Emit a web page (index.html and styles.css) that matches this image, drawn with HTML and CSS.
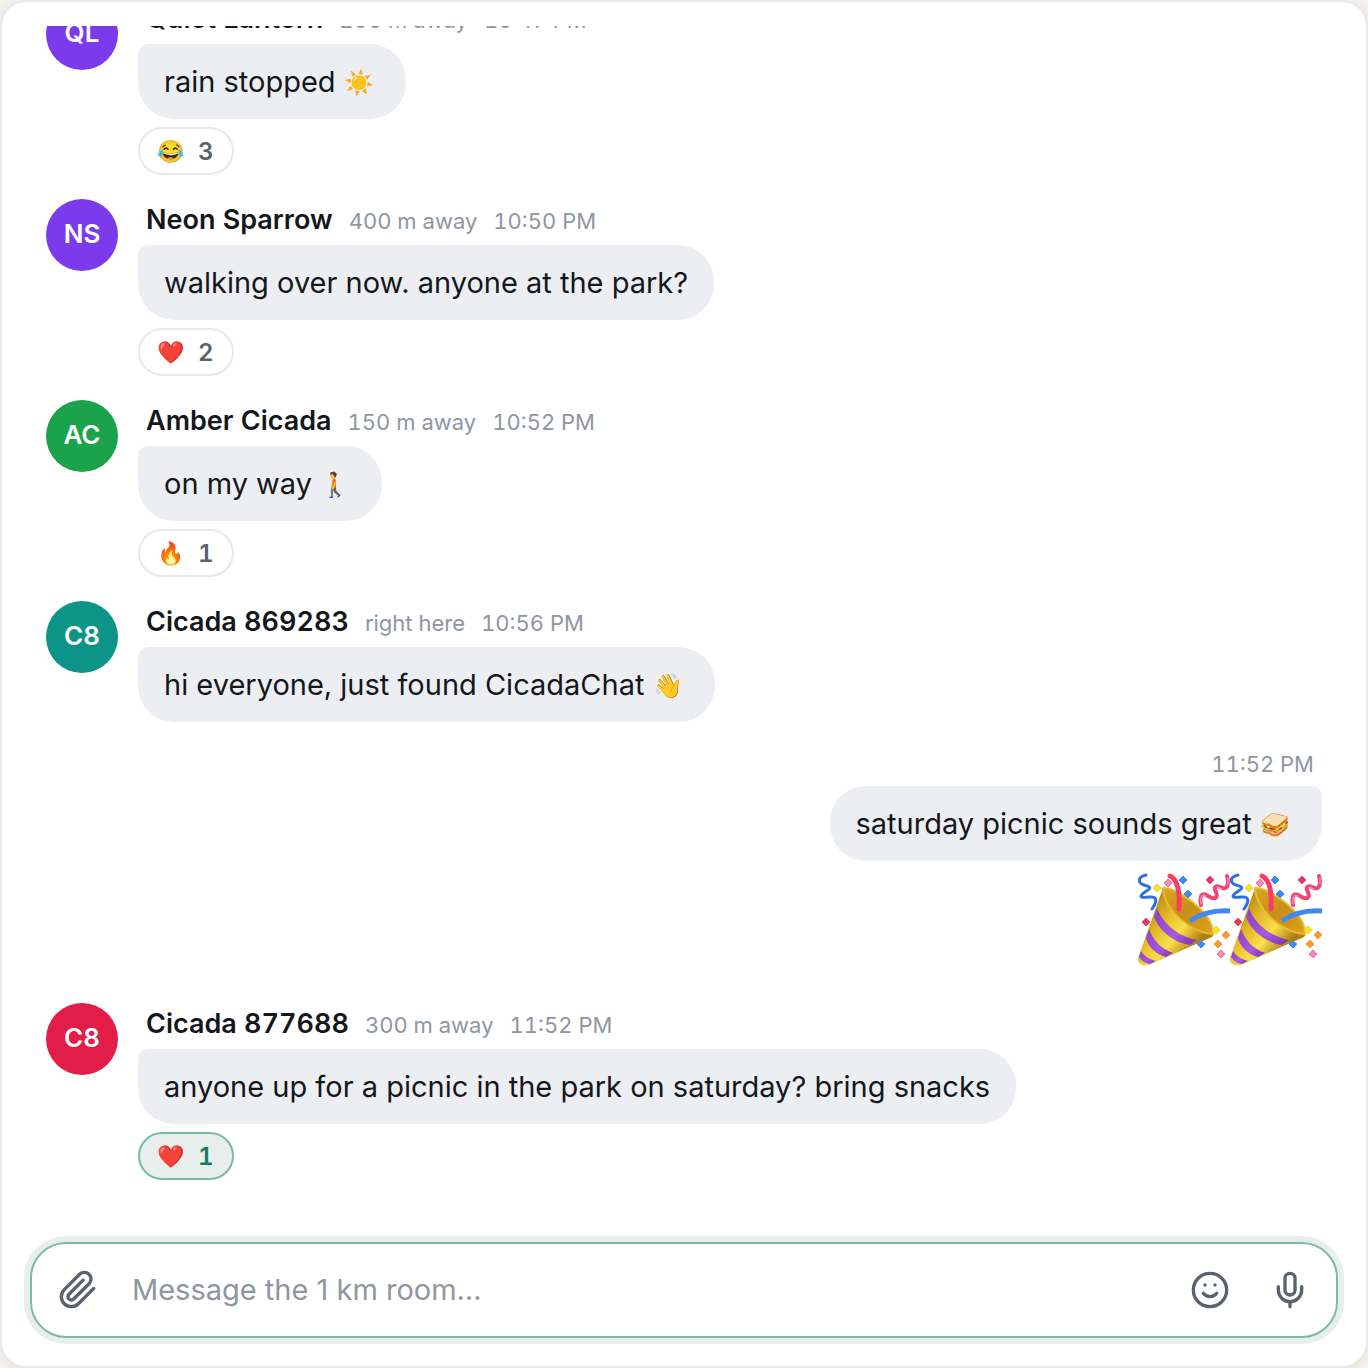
FILE: index.html
```html
<!DOCTYPE html>
<html lang="en">

<head>
  <meta charset="UTF-8" />
  <title>CicadaChat</title>
  <meta name="viewport" content="width=device-width, initial-scale=1.0" />
  <link rel="stylesheet" href="styles.css">
</head>

<body>
  <!-- Shared drawings -->
  <svg class="defs" width="0" height="0" aria-hidden="true">
    <defs>
      <linearGradient id="gold" x1="0.1" y1="0.3" x2="0.7" y2="0.8">
        <stop offset="0" stop-color="#b88a14" />
        <stop offset="0.3" stop-color="#e2b526" />
        <stop offset="0.65" stop-color="#fbe04a" />
        <stop offset="1" stop-color="#b07f14" />
      </linearGradient>
      <linearGradient id="mouth" x1="0" y1="0" x2="1" y2="1">
        <stop offset="0" stop-color="#d9a520" />
        <stop offset="0.5" stop-color="#c88e18" />
        <stop offset="1" stop-color="#dfa21c" />
      </linearGradient>
      <linearGradient id="violet" x1="0" y1="0" x2="1" y2="1">
        <stop offset="0" stop-color="#8a3fc4" />
        <stop offset="0.6" stop-color="#a758e0" />
        <stop offset="1" stop-color="#7b2fb0" />
      </linearGradient>
      <symbol id="popper" viewBox="0 0 92 94">
        <path fill="url(#gold)" d="M25 15C25 34 46 58 76 61L74 64L11 92C6 94 -1 91 0 85Z" />
        <path fill="url(#violet)" d="M19 35C24 49 38 63 59 67L52 72C34 69 21 57 16 44Z" />
        <path fill="url(#violet)" d="M11 56C15 67 23 76 35 80L28 84C17 81 10 73 8 65Z" />
        <path fill="url(#violet)" d="M3 78C6 83 11 86 18 88L12 91C6 90 3 87 1 84Z" />
        <path fill="url(#mouth)" stroke="#e9bb2c" stroke-width="2" d="M25 15C36 13 76 39 75 61C53 60 26 37 25 15Z" />
        <path fill="none" stroke="#fa3c68" stroke-width="5" stroke-linecap="round" d="M32 3C39 6 42 18 41 36" />
        <path fill="none" stroke="#3d8af7" stroke-width="5" d="M52 48C62 41 76 37 92 38" />
        <path fill="none" stroke="#2f6fe4" stroke-width="3" stroke-linecap="round" stroke-linejoin="round" d="M8 2C-1 4 0 10 6 12C13 14 14 15 7 19C0 24 3 25 11 24C20 23 19 29 14 36" />
        <path fill="none" stroke="#ee4675" stroke-width="4" stroke-linecap="round" stroke-linejoin="round" d="M63 32C61 22 64 19 70 23C78 28 81 24 77 17C76 13 79 12 84 15C90 17 91 10 89 3" />
        <path fill="none" stroke="#ffa9c3" stroke-width="1" stroke-linecap="round" d="M63 31C62 24 64 20 68 23M79 14L84 16M90 11L90 5" />
        <g stroke-linejoin="round" stroke-width="1">
          <path fill="#3d8af7" stroke="#3d8af7" d="M45 3L49 7L45 11L41 7ZM50 17L54 21L50 25L46 21ZM63 68L67 71L63 75L59 71Z" />
          <path fill="#f58ab5" stroke="#f0719f" d="M30 6L34 10L30 14L26 10ZM83 77L87 81L83 85L79 81Z" />
          <path fill="#f8e32c" stroke="#ecd324" d="M19 11L23 15L19 19L15 15ZM78 53L82 57L78 61L74 57Z" />
          <path fill="#e23a60" stroke="#e2557a" d="M72 3L76 7L72 11L68 7ZM8 45L12 49L8 53L4 49Z" />
          <path fill="#f79a36" stroke="#f79a36" d="M88 58L92 62L88 66L84 62ZM80 67L84 71L80 75L76 71Z" />
        </g>
      </symbol>
    </defs>
  </svg>

  <main class="room">
    <div class="messages">
      <article class="message">
        <div class="avatar violet">QL</div>
        <div class="body">
          <header class="meta"><strong>Quiet Lantern</strong><span>200 m away</span><time>10:47 PM</time></header>
          <p class="bubble">rain stopped <span class="emoji">☀️</span></p>
          <button class="reaction" type="button"><span class="emoji">😂</span>3</button>
        </div>
      </article>

      <article class="message">
        <div class="avatar violet">NS</div>
        <div class="body">
          <header class="meta"><strong>Neon Sparrow</strong><span>400 m away</span><time>10:50 PM</time></header>
          <p class="bubble">walking over now. anyone at the park?</p>
          <button class="reaction" type="button"><span class="emoji">❤️</span>2</button>
        </div>
      </article>

      <article class="message">
        <div class="avatar green">AC</div>
        <div class="body">
          <header class="meta"><strong>Amber Cicada</strong><span>150 m away</span><time>10:52 PM</time></header>
          <p class="bubble">on my way <span class="emoji">🚶</span></p>
          <button class="reaction" type="button"><span class="emoji">🔥</span>1</button>
        </div>
      </article>

      <article class="message">
        <div class="avatar teal">C8</div>
        <div class="body">
          <header class="meta"><strong>Cicada 869283</strong><span>right here</span><time>10:56 PM</time></header>
          <p class="bubble">hi everyone, just found CicadaChat <span class="emoji">👋</span></p>
        </div>
      </article>

      <!-- Own messages -->
      <article class="message own">
        <div class="body">
          <header class="meta"><time>11:52 PM</time></header>
          <p class="bubble">saturday picnic sounds great <span class="emoji">🥪</span></p>
          <div class="jumbo">
            <svg role="img" aria-label="party popper"><use href="#popper" /></svg>
            <svg role="img" aria-label="party popper"><use href="#popper" /></svg>
          </div>
        </div>
      </article>

      <article class="message">
        <div class="avatar red">C8</div>
        <div class="body">
          <header class="meta"><strong>Cicada 877688</strong><span>300 m away</span><time>11:52 PM</time></header>
          <p class="bubble">anyone up for a picnic in the park on saturday? bring snacks</p>
          <button class="reaction mine" type="button" aria-pressed="true"><span class="emoji">❤️</span>1</button>
        </div>
      </article>
    </div>

    <!-- Composer -->
    <form class="composer">
      <button class="tool" type="button" aria-label="Attach a file">
        <svg viewBox="0 0 24 24"><path d="M21.440 11.050l-9.190 9.190a6 6 0 0 1-8.490-8.490l9.190-9.190a4 4 0 0 1 5.660 5.660l-9.200 9.190a2 2 0 0 1-2.830-2.830l8.490-8.480" /></svg>
      </button>
      <input type="text" aria-label="Message" placeholder="Message the 1 km room…">
      <button class="tool" type="button" aria-label="Add emoji">
        <svg viewBox="0 0 24 24"><circle cx="12" cy="12" r="10" /><path d="M8 14s1.500 2 4 2 4-2 4-2M9 9h.01M15 9h.01" /></svg>
      </button>
      <button class="tool" type="button" aria-label="Record voice">
        <svg viewBox="0 0 24 24"><path d="M12 2a3 3 0 0 0-3 3v7a3 3 0 0 0 6 0V5a3 3 0 0 0-3-3ZM19 10v2a7 7 0 0 1-14 0v-2M12 19v3" /></svg>
      </button>
    </form>
  </main>
</body>

</html>
```
FILE: styles.css
```css
* {
  box-sizing: border-box;
  margin: 0;
  padding: 0;
}

body {
  font-family: Inter, sans-serif;
  background-color: #f2f1ec;
  color: #14181c;
}

button,
input {
  font: inherit;
  border: none;
  background: none;
}

.defs {
  display: block;
}

.room {
  height: 100vh;
  display: flex;
  flex-direction: column;
  padding: 24px 28px 28px;
  background-color: white;
  border: 2px solid #e9e9e9;
  border-radius: 26px;
  box-shadow: 0 2px 8px rgba(0, 0, 0, 0.06);
}

/* Messages */
.messages {
  flex: 1;
  min-height: 0;
  display: flex;
  flex-direction: column;
  justify-content: flex-end;
  gap: 24px;
  padding: 0 16px 62px;
  overflow: hidden;
}

.message {
  display: flex;
  gap: 20px;
}

.avatar {
  width: 72px;
  height: 72px;
  flex-shrink: 0;
  border-radius: 50%;
  color: white;
  font-size: 26px;
  font-weight: 600;
  line-height: 70px;
  text-align: center;
}

.violet {
  background-color: #7c3aed;
}

.green {
  background-color: #1aa34a;
}

.teal {
  background-color: #0d9488;
}

.red {
  background-color: #e11d48;
}

.body {
  display: flex;
  flex-direction: column;
  align-items: flex-start;
}

.meta {
  display: flex;
  align-items: baseline;
  gap: 16px;
  height: 46px;
  padding: 0 8px;
  color: #8f969f;
  font-size: 22px;
  font-variant-numeric: tabular-nums;
  line-height: 42px;
}

.meta strong {
  color: #14181c;
  font-size: 27px;
  font-weight: 600;
}

.bubble {
  padding: 16px 26px;
  background-color: #edeef2;
  border-radius: 10px 36px 36px 36px;
  font-size: 29px;
  line-height: 43px;
}

.emoji {
  display: inline-block;
  font-size: 24px;
  line-height: 1;
}

.bubble .emoji {
  width: 36px;
  vertical-align: 1px;
}

.reaction {
  display: flex;
  align-items: center;
  gap: 14px;
  height: 48px;
  min-width: 96px;
  margin-top: 8px;
  padding: 0 18px 0 16px;
  border: 2px solid #e9e9e9;
  border-radius: 24px;
  color: #58636e;
  font-size: 24px;
  font-weight: 600;
  font-variant-numeric: tabular-nums;
}

.reaction .emoji {
  width: 28px;
  font-size: 22px;
}

.reaction.mine {
  background-color: #e7eeeb;
  border-color: #7abaa6;
  color: #128060;
}

/* Own messages */
.own {
  justify-content: flex-end;
}

.own .body {
  align-items: flex-end;
}

.own .meta {
  height: 40px;
  line-height: 36px;
}

.own .bubble {
  border-radius: 36px 10px 36px 36px;
}

.jumbo {
  display: flex;
  padding: 12px 0;
}

.jumbo svg {
  width: 92px;
  height: 94px;
}

/* Composer */
.composer {
  display: flex;
  align-items: center;
  height: 96px;
  padding: 0 6px;
  border: 2px solid #7abaa6;
  border-radius: 36px;
  box-shadow: 0 0 0 6px #e7eeeb;
}

.composer input {
  flex: 1;
  min-width: 0;
  padding: 0 14px 2px;
  color: #14181c;
  font-size: 29px;
  outline: none;
}

.composer input::placeholder {
  color: #8f969f;
}

.tool {
  display: grid;
  place-items: center;
  width: 80px;
  height: 80px;
  color: #58636e;
  cursor: pointer;
}

.tool svg {
  width: 40px;
  height: 40px;
  fill: none;
  stroke: currentColor;
  stroke-width: 2;
  stroke-linecap: round;
  stroke-linejoin: round;
}
```
